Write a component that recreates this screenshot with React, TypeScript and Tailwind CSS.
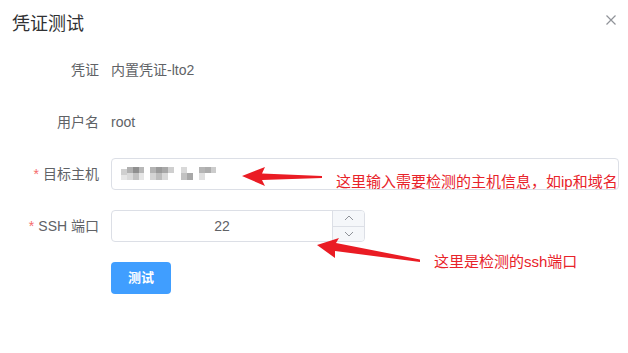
import React from "react";

const FONT = { fontFamily: '"Liberation Sans", "Noto Sans CJK SC", sans-serif' };

// pixelated blocks hiding the host address
const MOSAIC: [number, number, number, number, string][] = [
  [0, 2, 6, 6, "#cfcfcf"], [6, 0, 6, 6, "#b0b0b0"], [12, 0, 6, 6, "#8f8f8f"], [18, 0, 5, 6, "#b8b8b8"],
  [0, 8, 6, 5, "#e6e6e6"], [6, 6, 6, 7, "#dadada"], [12, 6, 6, 7, "#c2c2c2"], [18, 6, 5, 7, "#e6e6e6"],
  [29, 0, 6, 6, "#b3b3b3"], [35, 0, 6, 6, "#9a9a9a"], [41, 0, 6, 6, "#a8a8a8"], [47, 0, 6, 6, "#cfcfcf"],
  [29, 6, 6, 7, "#d4d4d4"], [35, 6, 6, 7, "#bdbdbd"], [41, 6, 6, 7, "#d9d9d9"],
  [60, 0, 6, 6, "#d9d9d9"], [60, 6, 6, 7, "#c2c2c2"], [66, 6, 6, 7, "#a8a8a8"],
  [78, 0, 6, 6, "#b5b5b5"], [84, 0, 6, 6, "#adadad"], [90, 0, 5, 6, "#cccccc"], [78, 6, 6, 7, "#e0e0e0"],
];

function FormRow({ label, required, children }: { label: string; required?: boolean; children: React.ReactNode }) {
  return (
    <div className="flex h-8 items-center">
      <div className="w-[111px] shrink-0 pr-3 text-right text-sm text-[#606266]">
        {required && <span className="mr-1 text-[#f56c6c]">*</span>}
        {label}
      </div>
      <div className="flex h-8 flex-1 items-center text-sm text-[#606266]">{children}</div>
    </div>
  );
}

export default function App() {
  return (
    <div className="relative h-[353px] w-[628px] overflow-hidden bg-white" style={FONT}>
      {/* Header */}
      <div className="flex h-[54px] items-start justify-between pl-3 pr-3 pt-[12px]">
        <span className="text-lg leading-6 text-[#303133]">凭证测试</span>
        <svg width="10" height="10" viewBox="0 0 10 10" className="mt-[3px]">
          <path d="M0.5 0.5L9.5 9.5M9.5 0.5L0.5 9.5" stroke="#909399" strokeWidth="1.2" />
        </svg>
      </div>

      {/* Form */}
      <div className="flex flex-col gap-5 pr-[9px]">
        <FormRow label="凭证">内置凭证-lto2</FormRow>
        <FormRow label="用户名">root</FormRow>
        <FormRow label="目标主机" required>
          <div className="flex h-8 w-full items-center rounded border border-[#dcdfe6] px-[9px]">
            <svg width="96" height="14" viewBox="0 0 96 14">
              {MOSAIC.map(([x, y, w, h, c], i) => (
                <rect key={i} x={x} y={y} width={w} height={h} fill={c} />
              ))}
            </svg>
          </div>
        </FormRow>
        <FormRow label="SSH 端口" required>
          <div className="flex h-8 w-[254px] overflow-hidden rounded border border-[#dcdfe6]">
            <div className="flex flex-1 items-center justify-center text-sm text-[#606266]">22</div>
            <div className="flex w-8 flex-col border-l border-[#dcdfe6] bg-[#f5f7fa]">
              <div className="flex flex-1 items-center justify-center border-b border-[#dcdfe6]">
                <svg width="10" height="6" viewBox="0 0 10 6">
                  <path d="M1 5L5 1L9 5" fill="none" stroke="#909399" strokeWidth="1" />
                </svg>
              </div>
              <div className="flex flex-1 items-center justify-center">
                <svg width="10" height="6" viewBox="0 0 10 6">
                  <path d="M1 1L5 5L9 1" fill="none" stroke="#909399" strokeWidth="1" />
                </svg>
              </div>
            </div>
          </div>
        </FormRow>
        <div className="flex h-8 items-center pl-[111px]">
          <button className="h-8 w-[60px] rounded bg-[#409eff] text-[13px] font-bold text-white">测试</button>
        </div>
      </div>

      {/* Annotations */}
      <svg className="pointer-events-none absolute left-0 top-0" width="628" height="353" viewBox="0 0 628 353">
        <polygon points="242,176 265,167 262,173.5 322,176 322,178 262,180 265,186" fill="#ea1c24" />
        <polygon points="317,245 339,238 336,243 420,259.5 420,262 335,251 335,258" fill="#ea1c24" />
      </svg>
      <div className="absolute left-[336px] top-[172px] text-[15px] leading-5 text-[#e8232a]">
        这里输入需要检测的主机信息，如ip和域名
      </div>
      <div className="absolute left-[434px] top-[252px] text-[15px] leading-5 text-[#e8232a]">
        这里是检测的ssh端口
      </div>
    </div>
  );
}
